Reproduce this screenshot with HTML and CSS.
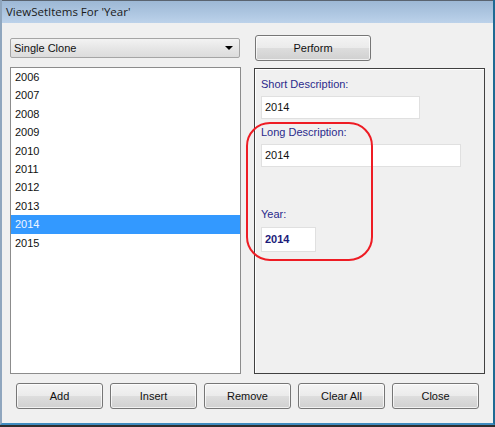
FILE: index.html
```html
<!DOCTYPE html>
<html>
<head>
<meta charset="utf-8">
<link rel="stylesheet" href="styles.css">
</head>
<body>
<div class="frame">
  <div class="window">
    <div class="titlebar">ViewSetItems For 'Year'</div>
    <div class="content">
      <div class="top-row">
        <div class="dropdown">
          <span>Single Clone</span>
          <span class="arrow"></span>
        </div>
        <div class="btn perform">Perform</div>
      </div>
      <div class="main-row">
        <div class="listbox">
          <div class="item">2006</div>
          <div class="item">2007</div>
          <div class="item">2008</div>
          <div class="item">2009</div>
          <div class="item">2010</div>
          <div class="item">2011</div>
          <div class="item">2012</div>
          <div class="item">2013</div>
          <div class="item selected">2014</div>
          <div class="item">2015</div>
        </div>
        <div class="groupbox">
          <div class="label l1">Short Description:</div>
          <div class="input short">2014</div>
          <div class="label l2">Long Description:</div>
          <div class="input long">2014</div>
          <div class="label l3">Year:</div>
          <div class="input year">2014</div>
        </div>
      </div>
      <div class="buttons">
        <div class="btn">Add</div>
        <div class="btn">Insert</div>
        <div class="btn">Remove</div>
        <div class="btn">Clear All</div>
        <div class="btn">Close</div>
      </div>
    </div>
    <div class="highlight"></div>
  </div>
</div>
</body>
</html>
```

FILE: styles.css
```css
* { box-sizing: border-box; }
html, body { margin: 0; padding: 0; }
body { width: 495px; height: 427px; overflow: hidden; background: #2b2b2b; font-family: "Liberation Sans", Arial, sans-serif; font-size: 11px; color: #000; }
.frame { width: 495px; height: 427px; border-bottom: 2px solid #2e2e2e; }
.window {
  position: relative;
  width: 495px; height: 425px;
  background: #f0f0f0;
  border-left: 2px solid #8fa6be;
  border-right: 2px solid #1f6a93;
  border-bottom: 2px solid #3f8cc0;
}
.titlebar {
  height: 23px;
  border-top: 1px solid #5a6470;
  background: linear-gradient(#9db8d5, #b2cae4 70%, #bcd2ea);
  font-family: "Open Sans", "Noto Sans", sans-serif;
  font-size: 11.5px;
  line-height: 21px;
  padding-left: 4px;
  color: #1a1a1a;
}
.content { padding: 12px 0 0 8px; }
.top-row { display: flex; align-items: center; height: 26px; }
.dropdown {
  width: 230px; height: 20px;
  border: 1px solid #a5a5a5;
  border-radius: 2px;
  background: linear-gradient(#f3f3f3, #e6e6e6 50%, #dcdcdc);
  display: flex; align-items: center; justify-content: space-between;
  padding: 0 5px 0 3px;
  color: #111;
}
.arrow {
  width: 0; height: 0;
  border-left: 4px solid transparent;
  border-right: 4px solid transparent;
  border-top: 4px solid #000;
  margin-right: 1px;
}
.btn {
  display: flex; align-items: center; justify-content: center;
  height: 26px;
  border: 1px solid #767676;
  border-radius: 3px;
  background: linear-gradient(#f4f4f4, #ebebeb 48%, #dddddd 52%, #d0d0d0);
  box-shadow: inset 0 0 0 1px rgba(255,255,255,0.7);
  color: #111;
}
.perform { width: 116px; margin-left: 15px; }
.main-row { display: flex; margin-top: 6px; height: 307px; }
.listbox {
  width: 231px; height: 307px;
  background: #fff;
  border: 1px solid #8c8c8c;
}
.item { height: 18.4px; line-height: 18.4px; padding-left: 4px; color: #111; }
.item.selected { background: #3399ff; color: #f0f6ff; }
.groupbox {
  width: 231px; height: 306px;
  margin-left: 13px;
  margin-top: 1px;
  border: 1px solid #404040;
  box-shadow: inset 1px 1px 0 #fff;
  padding-left: 6px;
}
.label { line-height: 13px; color: #2a2a8c; }
.input {
  background: #fff;
  border: 1px solid #e0e0e0;
  padding: 3px 0 0 3px;
  line-height: 14px;
  color: #111;
}
.l1 { margin-top: 9px; }
.short { margin-top: 5px; width: 159px; height: 23px; }
.l2 { margin-top: 7px; }
.long { margin-top: 5px; width: 200px; height: 23px; }
.l3 { margin-top: 41px; }
.year { margin-top: 6px; width: 55px; height: 25px; font-weight: bold; color: #1b1b7a; padding-top: 4px; }
.buttons { display: flex; gap: 7px; margin-top: 9px; padding-left: 6px; }
.buttons .btn { width: 87px; }
.highlight {
  position: absolute;
  left: 244px; top: 122px;
  width: 127px; height: 139px;
  border: 2px solid #ee1c24;
  border-radius: 24px;
}
```
